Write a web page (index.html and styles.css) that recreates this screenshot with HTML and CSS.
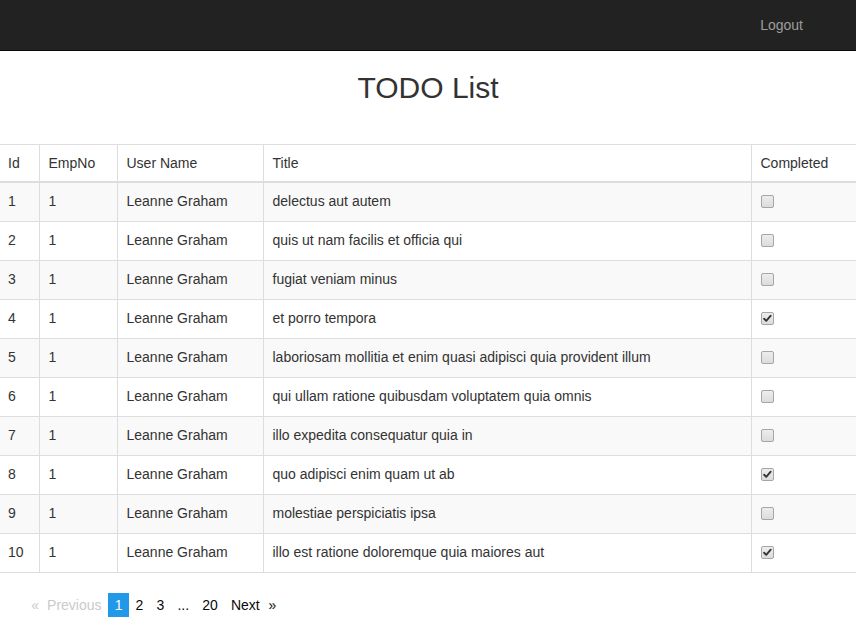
FILE: index.html
```html
<!DOCTYPE html>
<html>
<head>
<meta charset="utf-8">
<link rel="stylesheet" href="styles.css">
</head>
<body>
<nav class="navbar">
  <a class="nav-link" href="#">Logout</a>
</nav>
<h2 class="page-title">TODO List</h2>
<table class="todo-table">
  <colgroup>
    <col class="c-id"><col class="c-emp"><col class="c-user"><col class="c-title"><col class="c-done">
  </colgroup>
  <thead>
    <tr><th>Id</th><th>EmpNo</th><th>User Name</th><th>Title</th><th>Completed</th></tr>
  </thead>
  <tbody>
    <tr><td>1</td><td>1</td><td>Leanne Graham</td><td>delectus aut autem</td><td><span class="cb"></span></td></tr>
    <tr><td>2</td><td>1</td><td>Leanne Graham</td><td>quis ut nam facilis et officia qui</td><td><span class="cb"></span></td></tr>
    <tr><td>3</td><td>1</td><td>Leanne Graham</td><td>fugiat veniam minus</td><td><span class="cb"></span></td></tr>
    <tr><td>4</td><td>1</td><td>Leanne Graham</td><td>et porro tempora</td><td><span class="cb checked"><svg viewBox="0 0 13 13" width="11" height="11"><path d="M2.5 6.8 L5 9.3 L10.3 3.2" fill="none" stroke="#333" stroke-width="2.2" stroke-linecap="round" stroke-linejoin="round"/></svg></span></td></tr>
    <tr><td>5</td><td>1</td><td>Leanne Graham</td><td>laboriosam mollitia et enim quasi adipisci quia provident illum</td><td><span class="cb"></span></td></tr>
    <tr><td>6</td><td>1</td><td>Leanne Graham</td><td>qui ullam ratione quibusdam voluptatem quia omnis</td><td><span class="cb"></span></td></tr>
    <tr><td>7</td><td>1</td><td>Leanne Graham</td><td>illo expedita consequatur quia in</td><td><span class="cb"></span></td></tr>
    <tr><td>8</td><td>1</td><td>Leanne Graham</td><td>quo adipisci enim quam ut ab</td><td><span class="cb checked"><svg viewBox="0 0 13 13" width="11" height="11"><path d="M2.5 6.8 L5 9.3 L10.3 3.2" fill="none" stroke="#333" stroke-width="2.2" stroke-linecap="round" stroke-linejoin="round"/></svg></span></td></tr>
    <tr><td>9</td><td>1</td><td>Leanne Graham</td><td>molestiae perspiciatis ipsa</td><td><span class="cb"></span></td></tr>
    <tr><td>10</td><td>1</td><td>Leanne Graham</td><td>illo est ratione doloremque quia maiores aut</td><td><span class="cb checked"><svg viewBox="0 0 13 13" width="11" height="11"><path d="M2.5 6.8 L5 9.3 L10.3 3.2" fill="none" stroke="#333" stroke-width="2.2" stroke-linecap="round" stroke-linejoin="round"/></svg></span></td></tr>
  </tbody>
</table>
<ul class="pager">
  <li class="pg-item disabled prev"><span>Previous</span></li>
  <li class="pg-item current"><span>1</span></li>
  <li class="pg-item"><a href="#">2</a></li>
  <li class="pg-item"><a href="#">3</a></li>
  <li class="pg-item"><a href="#">...</a></li>
  <li class="pg-item"><a href="#">20</a></li>
  <li class="pg-item next"><a href="#">Next </a></li>
</ul>
</body>
</html>
```
FILE: styles.css
```css
html, body {
  margin: 0;
  padding: 0;
}
body {
  font-family: "Liberation Sans", Arial, sans-serif;
  font-size: 14px;
  line-height: 20px;
  color: #333;
  background: #fff;
}
.navbar {
  height: 50px;
  background: #222;
  border-bottom: 1px solid #080808;
  display: flex;
  justify-content: flex-end;
  align-items: flex-start;
  padding-right: 38px;
}
.nav-link {
  display: block;
  padding: 15px;
  line-height: 20px;
  color: #9d9d9d;
  text-decoration: none;
}
.page-title {
  margin: 20px 0 40px;
  font-size: 30px;
  font-weight: 500;
  line-height: 33px;
  text-align: center;
  color: #333;
}
.todo-table {
  width: 100%;
  table-layout: fixed;
  border-collapse: collapse;
  border-spacing: 0;
  margin: 0 0 20px;
}
.c-id { width: 39px; }
.c-emp { width: 78px; }
.c-user { width: 146px; }
.c-title { width: 488px; }
.todo-table th,
.todo-table td {
  padding: 8px 8px 8px 9px;
  text-align: left;
  vertical-align: top;
  border: 1px solid #ddd;
  line-height: 20px;
  white-space: nowrap;
  overflow: hidden;
}
.todo-table th:first-child,
.todo-table td:first-child {
  padding-left: 8px;
  border-left: 0;
}
.todo-table th {
  font-weight: normal;
  border-bottom-width: 2px;
}
.todo-table th:last-child,
.todo-table td:last-child { border-right: 0; }
.todo-table tbody tr:nth-child(odd) td {
  background: #f9f9f9;
}
.cb {
  display: block;
  box-sizing: border-box;
  width: 13px;
  height: 13px;
  margin: 4px 0 5px;
  border: 1px solid #a6a6a6;
  border-radius: 2px;
  background: linear-gradient(#ededed, #dcdcdc);
  position: relative;
}
.cb svg {
  display: block;
  position: absolute;
  left: 0;
  top: 0;
}
.pager {
  list-style: none;
  margin: 0 0 10px;
  padding: 0 0 0 25px;
  display: flex;
}
.pg-item {
  margin-right: 0.625px;
  padding: 1.875px 6.25px;
  line-height: 20px;
  color: #0a0a0a;
}
.pg-item a {
  color: #0a0a0a;
  text-decoration: none;
}
.pg-item.disabled {
  color: #cacaca;
}
.pg-item.current {
  background: #2199e8;
  color: #fefefe;
}
.prev span::before {
  content: "«";
  display: inline-block;
  margin-right: 8px;
}
.next a::after {
  content: "»";
  display: inline-block;
  margin-left: 5px;
}
```
